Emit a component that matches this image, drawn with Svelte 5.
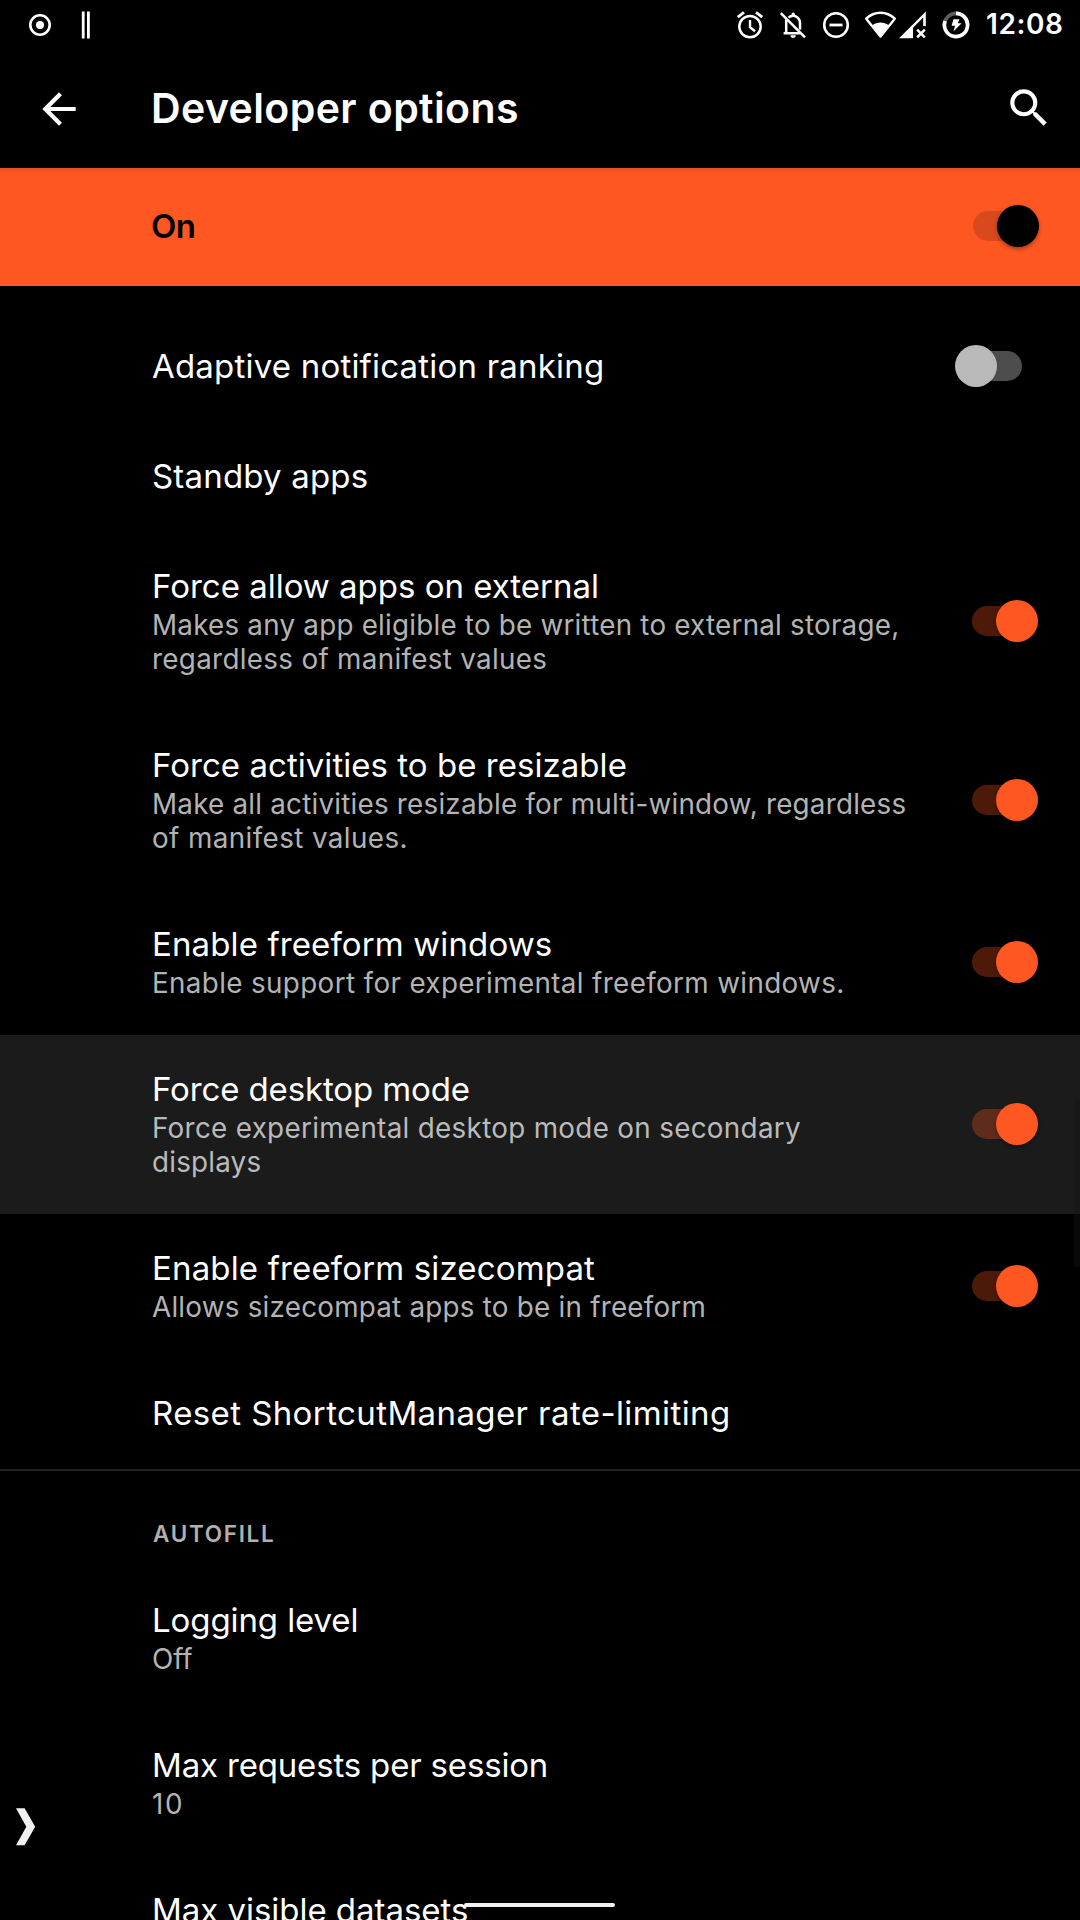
<script>
  // track: letter spacing of each line, in px
  const general = [
    { title: 'Adaptive notification ranking', track: 0.2, toggle: 'off' },
    { title: 'Standby apps', track: 0.18 },
    {
      title: 'Force allow apps on external', track: -0.01, toggle: 'on',
      summary: [
        ['Makes any app eligible to be written to external storage,', 0.22],
        ['regardless of manifest values', 0.31],
      ],
    },
    {
      title: 'Force activities to be resizable', track: 0.04, toggle: 'on',
      summary: [
        ['Make all activities resizable for multi-window, regardless', 0.22],
        ['of manifest values.', 0.4],
      ],
    },
    {
      title: 'Enable freeform windows', track: 0.12, toggle: 'on',
      summary: [['Enable support for experimental freeform windows.', 0.36]],
    },
    {
      title: 'Force desktop mode', track: -0.12, toggle: 'on', pressed: true,
      summary: [
        ['Force experimental desktop mode on secondary', 0.31],
        ['displays', 0.2],
      ],
    },
    {
      title: 'Enable freeform sizecompat', track: 0.15, toggle: 'on',
      summary: [['Allows sizecompat apps to be in freeform', 0.23]],
    },
    { title: 'Reset ShortcutManager rate-limiting', track: 0.4 },
  ];
  const autofill = [
    { title: 'Logging level', track: -0.1, summary: [['Off', -0.1]] },
    { title: 'Max requests per session', track: -0.17, summary: [['10', 1.6]] },
    { title: 'Max visible datasets', track: -0.04 },
  ];
</script>

{#snippet row(item)}
  <div class="row" class:pressed={item.pressed}>
    <div class="text">
      <div class="title" style="letter-spacing: {item.track}px">{item.title}</div>
      {#if item.summary}
        <div class="summary">
          {#each item.summary as [line, track]}
            <div style="letter-spacing: {track}px">{line}</div>
          {/each}
        </div>
      {/if}
    </div>
    {#if item.toggle}
      <div class="switch {item.toggle}"><span class="thumb"></span></div>
    {/if}
  </div>
{/snippet}

<div class="screen">
  <header class="status">
    <svg class="rec" width="24" height="24" viewBox="0 0 24 24" fill="none">
      <circle cx="12" cy="12" r="9.7" stroke="#fff" stroke-width="2.6" />
      <circle cx="12" cy="12" r="4" fill="#fff" />
    </svg>
    <svg class="bars" width="10" height="28" viewBox="0 0 10 28" fill="#fff">
      <rect x="0.8" y="0.5" width="2.8" height="27" />
      <rect x="6" y="0.5" width="2.8" height="27" />
    </svg>
    <span class="spacer"></span>
    <svg class="alarm" width="28" height="28" viewBox="0 0 28 28" fill="none" stroke="#fff">
      <circle cx="14" cy="15.6" r="10.7" stroke-width="2.5" />
      <path d="M14 9v7.2l5 4" stroke-width="2.4" />
      <path d="M1.8 6.2 8 1.4M26.2 6.2 20 1.4" stroke-width="2.8" />
    </svg>
    <svg class="bell" width="28" height="28" viewBox="0 0 28 28" fill="none" stroke="#fff">
      <path d="M7.2 8.5v14.2M4.600 22.300H21M9.500 6.600C11 5.200 12.500 4.700 14.100 4.700c4 0 6.900 3.200 6.900 7.300v6.500" stroke-width="2.500" />
      <path d="M12.600 4.500V3a1.600 1.600 0 0 1 3.200 0v1.500zM11.500 24.200h5.200a2.600 2.600 0 0 1-5.200 0z" fill="#fff" stroke="none" />
      <path d="M1.800 2.200 26 26.400" stroke-width="2.600" />
    </svg>
    <svg class="dnd" width="28" height="28" viewBox="0 0 28 28" fill="none" stroke="#fff">
      <circle cx="14" cy="14" r="11.800" stroke-width="2.500" />
      <path d="M7.500 14h13" stroke-width="2.800" />
    </svg>
    <svg class="wifi" width="33" height="28" viewBox="0 0 33 28">
      <path d="M2.200 7.700C10.300-.3 22.700-.3 30.800 7.700L16.500 25.500z" fill="none" stroke="#fff" stroke-width="2.400" stroke-linejoin="round" />
      <path d="M8 14.500C13 10.500 20 10.500 25 14.500L16.500 25.500z" fill="#fff" />
    </svg>
    <svg class="cell" width="28" height="28" viewBox="0 0 28 28">
      <path d="M0 27.200 26.800 0.500V15h-2.600V6.500L14 16.700v10.500z" fill="#fff" />
      <path d="m18.200 18.600 7.600 7.800M25.800 18.600l-7.600 7.800" stroke="#fff" stroke-width="2.500" />
    </svg>
    <svg class="battery" width="28" height="28" viewBox="0 0 28 28" fill="none">
      <circle cx="14" cy="14" r="11.600" stroke="#5c5c5c" stroke-width="3.600" />
      <path d="M14 2.400A11.600 11.600 0 1 1 3.100 10" stroke="#fff" stroke-width="3.600" />
      <path d="M11.400 8.200h6l-1.600 4h3.800L11.400 20.600l1.700-5.900H9.600z" fill="#fff" />
    </svg>
    <span class="clock">12:08</span>
  </header>

  <div class="appbar">
    <svg class="back" width="50" height="50" viewBox="0 0 24 24" fill="#fff">
      <path d="M20 11H7.830l5.590-5.590L12 4l-8 8 8 8 1.410-1.410L7.830 13H20v-2z" />
    </svg>
    <h1>Developer options</h1>
    <svg class="search" width="50" height="50" viewBox="0 0 24 24" fill="#fff">
      <path d="M15.500 14h-.79l-.28-.27A6.471 6.471 0 0 0 16 9.500 6.500 6.500 0 1 0 9.500 16c1.610 0 3.090-.59 4.230-1.570l.27.28v.79l5 4.990L20.490 19l-4.990-5zm-6 0C7.010 14 5 11.990 5 9.500S7.010 5 9.500 5 14 7.010 14 9.500 11.990 14 9.500 14z" />
    </svg>
  </div>

  <div class="master">
    <span class="label">On</span>
    <div class="switch inverse"><span class="thumb"></span></div>
  </div>

  <main>
    {#each general as item}{@render row(item)}{/each}
    <h2>AUTOFILL</h2>
    {#each autofill as item}{@render row(item)}{/each}
  </main>

  <div class="scrollbar"></div>
  <svg class="edge" width="20" height="38" viewBox="0 0 20 38" fill="#f0f0f0">
    <path d="M0 .2h8.600L19.200 18.700 8.600 37.200H0l10.300-18.500z" />
  </svg>
  <div class="home"></div>
</div>

<style>
  :global(body) { background: #000; }
  .screen {
    position: relative;
    display: flex;
    flex-direction: column;
    width: 1080px;
    height: 1920px;
    overflow: hidden;
    background: #000;
    color: #fff;
    font-family: Inter, Roboto, sans-serif;
  }
  svg { display: block; flex: none; }
  .status {
    display: flex;
    align-items: center;
    flex: none;
    height: 50px;
    padding: 0 17px 0 28px;
  }
  .bars { margin-left: 29px; }
  .spacer { flex: 1; }
  .bell { margin-left: 15px; }
  .dnd { margin-left: 15px; }
  .wifi { margin-left: 14px; }
  .cell { margin-left: 2px; }
  .battery { margin-left: 15px; }
  .clock {
    width: 77px;
    margin: 0 0 2px 16px;
    font-size: 28px;
    font-weight: 600;
    line-height: 48px;
    letter-spacing: 0.6px;
    white-space: nowrap;
  }
  .appbar {
    display: flex;
    align-items: center;
    flex: none;
    height: 118px;
    padding: 0 26px 0 34px;
  }
  h1 {
    flex: 1;
    margin: 0 0 2px 67px;
    font-size: 41px;
    font-weight: 600;
    line-height: 48px;
    letter-spacing: 0.4px;
  }
  .search { margin-bottom: 2px; }
  .master {
    display: flex;
    align-items: center;
    justify-content: space-between;
    flex: none;
    box-sizing: border-box;
    height: 118px;
    padding: 0 57px 2px 151px;
    background: linear-gradient(#e8501f, #ff5722 6px);
    color: #000;
  }
  .label {
    font-size: 33px;
    font-weight: 600;
    line-height: 42px;
    letter-spacing: -0.5px;
  }
  main { padding-top: 26px; }
  .row {
    display: flex;
    align-items: center;
    justify-content: space-between;
    padding: 33px 58px 35px 152px;
  }
  .row.pressed { background: #1b1b1b; }
  .title {
    font-size: 33px;
    line-height: 42px;
    white-space: nowrap;
  }
  .summary {
    padding-top: 1px;
    color: #b3b3b3;
    font-size: 27.8px;
    line-height: 34px;
    white-space: nowrap;
  }
  .pressed .summary { color: #bababa; }
  .switch {
    position: relative;
    flex: none;
    width: 50px;
    height: 30px;
    border-radius: 15px;
  }
  .thumb {
    position: absolute;
    top: -6px;
    width: 42px;
    height: 42px;
    border-radius: 50%;
  }
  .on { background: rgba(255, 87, 34, 0.3); }
  .on .thumb { right: -16px; background: #ff5722; box-shadow: 0 2px 4px rgba(0, 0, 0, 0.3); }
  .off { background: #4d4d4d; }
  .off .thumb { left: -17px; background: #b9b9b9; }
  .inverse { background: #d84a1e; }
  .inverse .thumb { right: -16px; background: #000; box-shadow: 0 2px 4px rgba(0, 0, 0, 0.35); }
  h2 {
    margin: 0;
    padding: 47px 152px 16px 153px;
    border-top: 2px solid #222;
    color: #b0b0b0;
    font-size: 22.5px;
    font-weight: 600;
    line-height: 32px;
    letter-spacing: 1.7px;
  }
  .scrollbar {
    position: absolute;
    top: 1100px;
    right: 0;
    width: 6px;
    height: 167px;
    background: rgba(20, 20, 20, 0.4);
  }
  .edge {
    position: absolute;
    left: 16px;
    top: 1808px;
  }
  .home {
    position: absolute;
    left: 464px;
    top: 1903px;
    width: 151px;
    height: 4px;
    border-radius: 2px;
    background: #f0f0f0;
  }
</style>
